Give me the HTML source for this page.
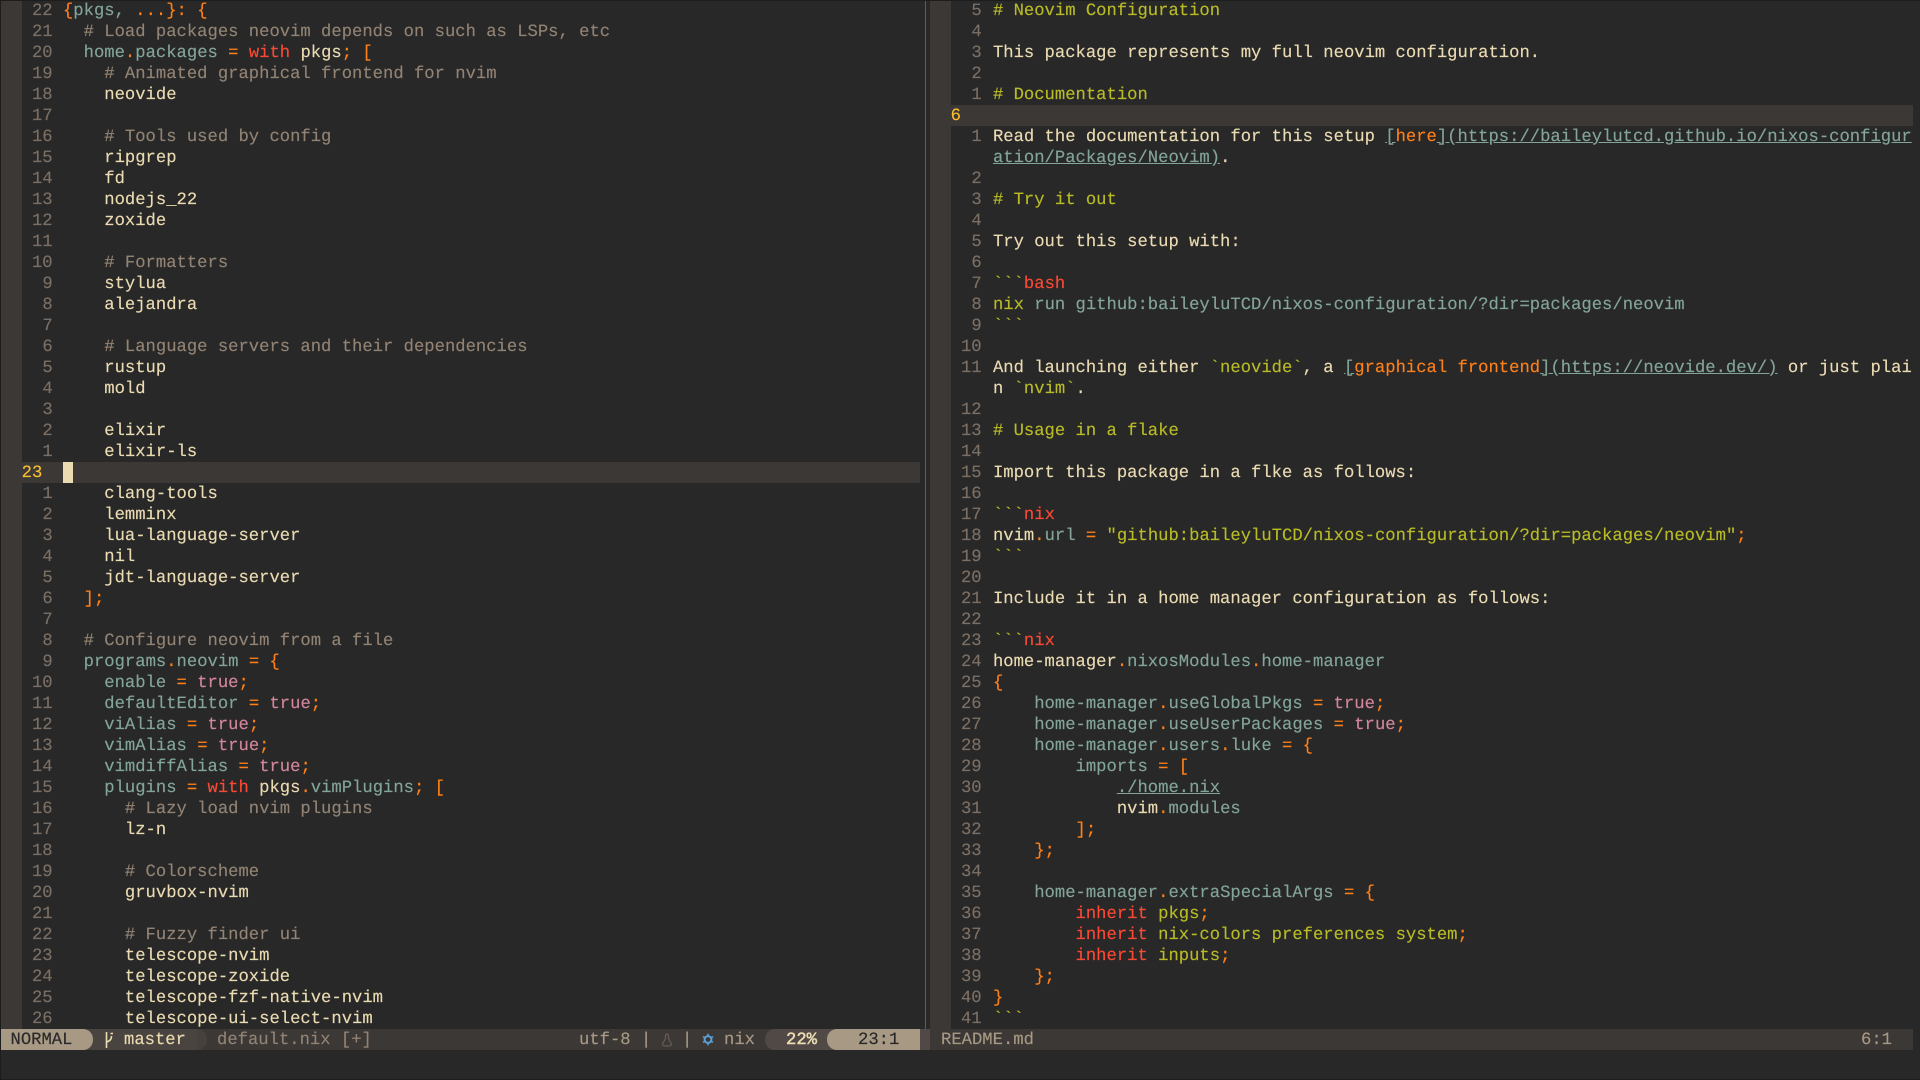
<!DOCTYPE html>
<html><head><meta charset="utf-8"><title>neovim</title>
<style>
html,body{margin:0;padding:0;background:#282828;width:1920px;height:1080px;overflow:hidden}
#s{position:relative;width:1920px;height:1080px;overflow:hidden;background:#282828;font-family:"Liberation Mono",monospace;font-size:17.22px;line-height:23px;color:#ebdbb2;text-rendering:geometricPrecision;-webkit-text-stroke:.15px}
.w{position:absolute;top:0;height:1029px;overflow:hidden}
.w .bar{position:absolute;left:0;top:0;width:20.66px;height:1029px;background:#3c3836}
.l{position:relative;height:21px;padding-left:20.66px;white-space:pre}
.l b{display:inline-block;font-weight:normal;width:30.99px;height:21px;vertical-align:top;text-align:right;margin-right:10.33px;color:#7c6f64}
#rw .l b{margin-right:11.3px}
.cur{background:#3c3836;margin-left:20.66px;padding-left:0}
.cur b{color:#fabd2f;text-align:left}
.o{color:#fe8019}.r{color:#fb4934}.g{color:#b8bb26}.u{color:#83a598}.p{color:#d3869b}.c{color:#928374}.k{text-decoration:underline}
.st{position:absolute;top:1029px;height:21px}
.t{position:absolute;top:1029px;height:21px;line-height:23px;white-space:pre}
</style></head><body><div id="s">
<div class="w" style="left:1px;width:919px"><div class="bar"></div>
<div class="l"><b>22</b><span class="o">{</span><span class="u">pkgs,</span> <span class="o">...}: {</span></div>
<div class="l"><b>21</b><span class="c">  # Load packages neovim depends on such as LSPs, etc</span></div>
<div class="l"><b>20</b>  <span class="u">home</span><span class="o">.</span><span class="u">packages</span> <span class="o">=</span> <span class="r">with</span> pkgs<span class="o">;</span> <span class="o">[</span></div>
<div class="l"><b>19</b><span class="c">    # Animated graphical frontend for nvim</span></div>
<div class="l"><b>18</b>    neovide</div>
<div class="l"><b>17</b></div>
<div class="l"><b>16</b><span class="c">    # Tools used by config</span></div>
<div class="l"><b>15</b>    ripgrep</div>
<div class="l"><b>14</b>    fd</div>
<div class="l"><b>13</b>    nodejs_22</div>
<div class="l"><b>12</b>    zoxide</div>
<div class="l"><b>11</b></div>
<div class="l"><b>10</b><span class="c">    # Formatters</span></div>
<div class="l"><b>9</b>    stylua</div>
<div class="l"><b>8</b>    alejandra</div>
<div class="l"><b>7</b></div>
<div class="l"><b>6</b><span class="c">    # Language servers and their dependencies</span></div>
<div class="l"><b>5</b>    rustup</div>
<div class="l"><b>4</b>    mold</div>
<div class="l"><b>3</b></div>
<div class="l"><b>2</b>    elixir</div>
<div class="l"><b>1</b>    elixir-ls</div>
<div class="l cur"><b>23</b><span style="display:inline-block;width:10.33px;height:21px;background:#ebdbb2;vertical-align:top"></span></div>
<div class="l"><b>1</b>    clang-tools</div>
<div class="l"><b>2</b>    lemminx</div>
<div class="l"><b>3</b>    lua-language-server</div>
<div class="l"><b>4</b>    nil</div>
<div class="l"><b>5</b>    jdt-language-server</div>
<div class="l"><b>6</b>  <span class="o">];</span></div>
<div class="l"><b>7</b></div>
<div class="l"><b>8</b><span class="c">  # Configure neovim from a file</span></div>
<div class="l"><b>9</b>  <span class="u">programs</span><span class="o">.</span><span class="u">neovim</span> <span class="o">= {</span></div>
<div class="l"><b>10</b>    <span class="u">enable</span> <span class="o">=</span> <span class="p">true</span><span class="o">;</span></div>
<div class="l"><b>11</b>    <span class="u">defaultEditor</span> <span class="o">=</span> <span class="p">true</span><span class="o">;</span></div>
<div class="l"><b>12</b>    <span class="u">viAlias</span> <span class="o">=</span> <span class="p">true</span><span class="o">;</span></div>
<div class="l"><b>13</b>    <span class="u">vimAlias</span> <span class="o">=</span> <span class="p">true</span><span class="o">;</span></div>
<div class="l"><b>14</b>    <span class="u">vimdiffAlias</span> <span class="o">=</span> <span class="p">true</span><span class="o">;</span></div>
<div class="l"><b>15</b>    <span class="u">plugins</span> <span class="o">=</span> <span class="r">with</span> pkgs<span class="o">.</span><span class="u">vimPlugins</span><span class="o">;</span> <span class="o">[</span></div>
<div class="l"><b>16</b><span class="c">      # Lazy load nvim plugins</span></div>
<div class="l"><b>17</b>      lz-n</div>
<div class="l"><b>18</b></div>
<div class="l"><b>19</b><span class="c">      # Colorscheme</span></div>
<div class="l"><b>20</b>      gruvbox-nvim</div>
<div class="l"><b>21</b></div>
<div class="l"><b>22</b><span class="c">      # Fuzzy finder ui</span></div>
<div class="l"><b>23</b>      telescope-nvim</div>
<div class="l"><b>24</b>      telescope-zoxide</div>
<div class="l"><b>25</b>      telescope-fzf-native-nvim</div>
<div class="l"><b>26</b>      telescope-ui-select-nvim</div>
</div>

<div style="position:absolute;left:925px;top:0;width:1px;height:1029px;background:#665c54"></div>

<div class="w" id="rw" style="left:930px;width:983px"><div class="bar"></div>
<div class="l"><b>5</b><span class="g"># Neovim Configuration</span></div>
<div class="l"><b>4</b></div>
<div class="l"><b>3</b>This package represents my full neovim configuration.</div>
<div class="l"><b>2</b></div>
<div class="l"><b>1</b><span class="g"># Documentation</span></div>
<div class="l cur"><b>6</b></div>
<div class="l"><b>1</b>Read the documentation for this setup <span class="k u">[</span><span class="o">here</span><span class="k u">](https://baileylutcd.github.io/nixos-configur</span></div>
<div class="l"><b></b><span class="k u">ation/Packages/Neovim)</span>.</div>
<div class="l"><b>2</b></div>
<div class="l"><b>3</b><span class="g"># Try it out</span></div>
<div class="l"><b>4</b></div>
<div class="l"><b>5</b>Try out this setup with:</div>
<div class="l"><b>6</b></div>
<div class="l"><b>7</b><span class="g">&#96;&#96;&#96;</span><span class="r">bash</span></div>
<div class="l"><b>8</b><span class="g">nix</span> <span class="u">run github:baileyluTCD/nixos-configuration/?dir=packages/neovim</span></div>
<div class="l"><b>9</b><span class="g">&#96;&#96;&#96;</span></div>
<div class="l"><b>10</b></div>
<div class="l"><b>11</b>And launching either <span class="g">&#96;neovide&#96;</span>, a <span class="k u">[</span><span class="o">graphical frontend</span><span class="k u">](https://neovide.dev/)</span> or just plai</div>
<div class="l"><b></b>n <span class="g">&#96;nvim&#96;</span>.</div>
<div class="l"><b>12</b></div>
<div class="l"><b>13</b><span class="g"># Usage in a flake</span></div>
<div class="l"><b>14</b></div>
<div class="l"><b>15</b>Import this package in a flke as follows:</div>
<div class="l"><b>16</b></div>
<div class="l"><b>17</b><span class="g">&#96;&#96;&#96;</span><span class="r">nix</span></div>
<div class="l"><b>18</b>nvim<span class="o">.</span><span class="u">url</span> <span class="o">=</span> <span class="g">"github:baileyluTCD/nixos-configuration/?dir=packages/neovim"</span><span class="o">;</span></div>
<div class="l"><b>19</b><span class="g">&#96;&#96;&#96;</span></div>
<div class="l"><b>20</b></div>
<div class="l"><b>21</b>Include it in a home manager configuration as follows:</div>
<div class="l"><b>22</b></div>
<div class="l"><b>23</b><span class="g">&#96;&#96;&#96;</span><span class="r">nix</span></div>
<div class="l"><b>24</b>home-manager<span class="o">.</span><span class="u">nixosModules</span><span class="o">.</span><span class="u">home-manager</span></div>
<div class="l"><b>25</b><span class="o">{</span></div>
<div class="l"><b>26</b>    <span class="u">home-manager</span><span class="o">.</span><span class="u">useGlobalPkgs</span> <span class="o">=</span> <span class="p">true</span><span class="o">;</span></div>
<div class="l"><b>27</b>    <span class="u">home-manager</span><span class="o">.</span><span class="u">useUserPackages</span> <span class="o">=</span> <span class="p">true</span><span class="o">;</span></div>
<div class="l"><b>28</b>    <span class="u">home-manager</span><span class="o">.</span><span class="u">users</span><span class="o">.</span><span class="u">luke</span> <span class="o">= {</span></div>
<div class="l"><b>29</b>        <span class="u">imports</span> <span class="o">= [</span></div>
<div class="l"><b>30</b>            <span class="k u">./home.nix</span></div>
<div class="l"><b>31</b>            nvim<span class="o">.</span><span class="u">modules</span></div>
<div class="l"><b>32</b>        <span class="o">];</span></div>
<div class="l"><b>33</b>    <span class="o">};</span></div>
<div class="l"><b>34</b></div>
<div class="l"><b>35</b>    <span class="u">home-manager</span><span class="o">.</span><span class="u">extraSpecialArgs</span> <span class="o">= {</span></div>
<div class="l"><b>36</b>        <span class="r">inherit</span> <span class="g">pkgs</span><span class="o">;</span></div>
<div class="l"><b>37</b>        <span class="r">inherit</span> <span class="g">nix-colors preferences system</span><span class="o">;</span></div>
<div class="l"><b>38</b>        <span class="r">inherit</span> <span class="g">inputs</span><span class="o">;</span></div>
<div class="l"><b>39</b>    <span class="o">};</span></div>
<div class="l"><b>40</b><span class="o">}</span></div>
<div class="l"><b>41</b><span class="g">&#96;&#96;&#96;</span></div>
</div>

<div class="st" style="left:1px;width:919px;background:#3c3836"></div>
<div class="st" style="left:920px;width:10px;background:#504945"></div>
<div class="st" style="left:930px;width:983px;background:#3c3836"></div>
<div class="st" style="left:187px;width:20px;background:#47413d;border-radius:0 10px 10px 0"></div>
<div class="st" style="left:80px;width:117px;background:#4a4440"></div>
<div class="st" style="left:1px;width:92px;background:#a89984;border-radius:0 10px 10px 0"></div>
<div class="t" style="left:10.5px;color:#282828">NORMAL</div>
<svg style="position:absolute;left:103px;top:1031px" width="12" height="18" viewBox="0 0 12 18" fill="none" stroke="#ebdbb2" stroke-width="1.6"><path d="M3.5 1V17"/><path d="M3.5 11C8 9.5 8.5 7.5 8.5 5"/><path d="M7.5 2.5H10"/></svg>
<div class="t" style="left:124px">master</div>
<div class="t" style="left:217px;color:#928374">default.nix [+]</div>
<div class="t" style="left:579px;color:#a89984">utf-8</div>
<div class="t" style="left:641px;color:#a89984">|</div>
<svg style="position:absolute;left:661px;top:1033px" width="12" height="14" viewBox="0 0 12 14" fill="none" stroke="#665c54" stroke-width="1.2"><path d="M6 1C4.5 1 4.5 3 4.5 5C4.5 7 2 9 1.5 11.5C1.5 12.5 3 13 6 13C9 13 10.5 12.5 10.5 11.5C10 9 7.5 7 7.5 5C7.5 3 7.5 1 6 1Z"/></svg>
<div class="t" style="left:682px;color:#a89984">|</div>
<svg style="position:absolute;left:702px;top:1033px" width="12" height="13" viewBox="0 0 12 13"><circle cx="6" cy="6.5" r="3.4" fill="none" stroke="#5c9fd4" stroke-width="2"/><g stroke="#5c9fd4" stroke-width="1.5"><path d="M6 .6V2.8M6 10.2V12.4"/><path d="M.9 3.6L2.9 4.7M9.1 8.3L11.1 9.4"/><path d="M.9 9.4L2.9 8.3M9.1 4.7L11.1 3.6"/></g></svg>
<div class="t" style="left:724px;color:#a89984">nix</div>
<div class="st" style="left:765px;width:72px;background:#504945;border-radius:10px 0 0 10px"></div>
<div class="t" style="left:786px;-webkit-text-stroke:.5px">22%</div>
<div class="st" style="left:827px;width:93px;background:#a89984;border-radius:10px 0 0 10px"></div>
<div class="t" style="left:858px;color:#282828">23:1</div>
<div class="t" style="left:941px;color:#a89984">README.md</div>
<div class="t" style="left:1861px;color:#a89984">6:1</div>
<div style="position:absolute;left:0;top:0;width:1920px;height:1px;background:#1d1d1d"></div>
<div style="position:absolute;left:0;top:0;width:1px;height:1080px;background:#1d1d1d"></div>
<div style="position:absolute;left:0;top:1079px;width:1920px;height:1px;background:#1d1d1d"></div>
</div></body></html>
